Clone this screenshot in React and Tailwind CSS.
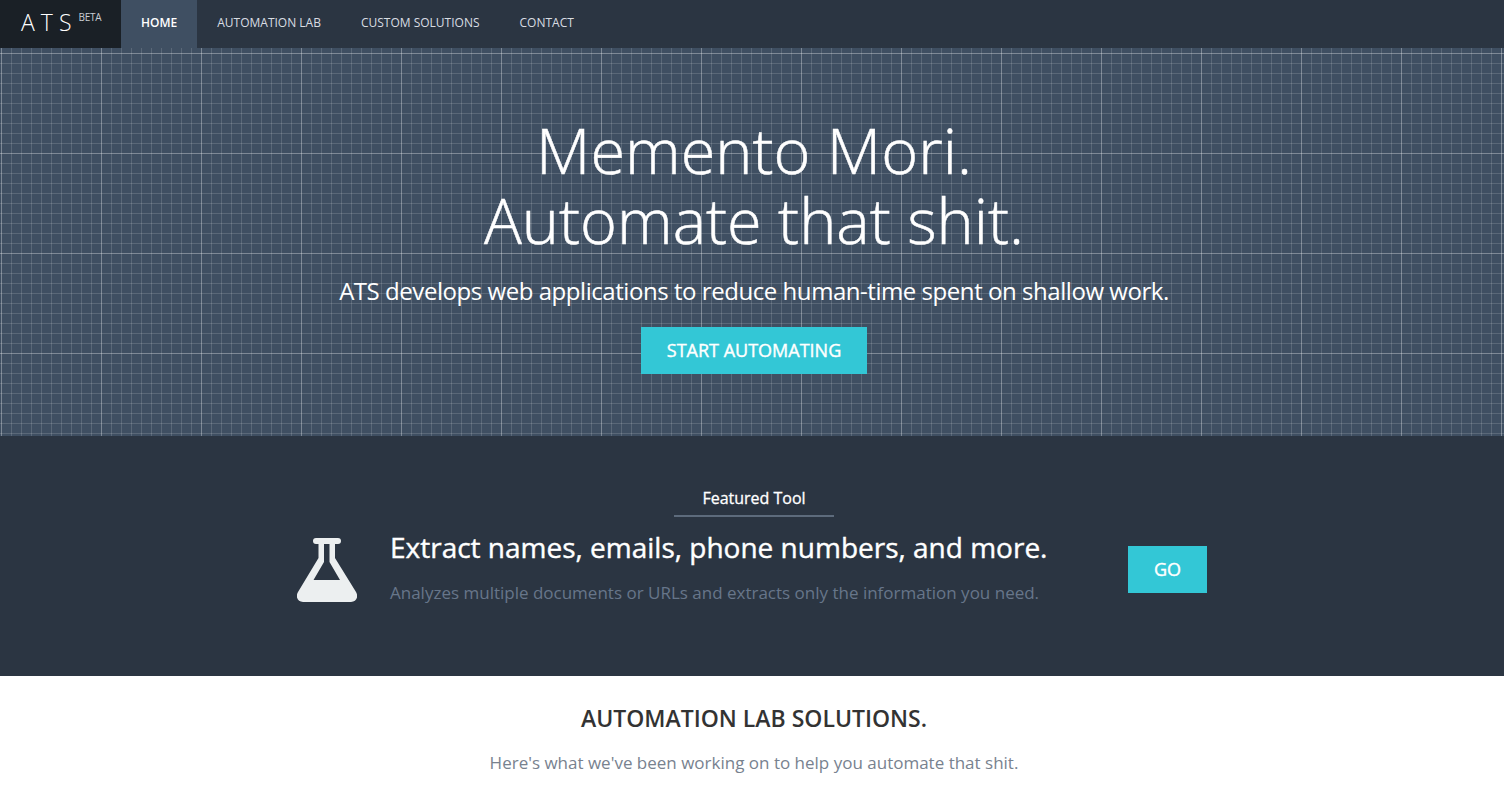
const navItems = ["Automation Lab", "Custom Solutions", "Contact"];

function Flask({ className }) {
  return (
    <svg viewBox="0 0 60 64" className={className} fill="#eceff0" fillRule="evenodd">
      <path d="M19 0H41a3 3 0 0 1 0 6H38V20L59 54C62 59 59 64 54 64H6C1 64-2 59 1 54L21.500 20V6H19a3 3 0 0 1 0-6zM27 6V24L16.500 42H43L32.500 24V6z" />
    </svg>
  );
}

export default function App() {
  return (
    <div className="h-[785px] overflow-hidden bg-white font-['Open_Sans',sans-serif]">
      <nav className="flex h-12 bg-[#2b3542]">
        <a className="flex w-[121px] bg-[#1a2026] pl-[21px] text-white">
          <span className="mt-[7px] text-[23px] leading-[30px] font-light tracking-[6px]">ATS</span>
          <span className="mt-[10px] ml-[1px] text-[10px] leading-[14px] tracking-[-0.2px] text-[#c9ced4]">BETA</span>
        </a>
        <a className="flex items-center bg-[#3f4f62] px-5 pb-[2px] text-xs font-semibold text-white">HOME</a>
        {navItems.map((item) => (
          <a key={item} className="flex items-center px-5 pb-[2px] text-xs font-normal text-[#d9dde2] uppercase">
            {item}
          </a>
        ))}
      </nav>

      <section className="flex h-[388px] flex-col items-center bg-[#3f4f62] bg-[linear-gradient(rgba(255,255,255,0.22)_1px,transparent_1px),linear-gradient(90deg,rgba(255,255,255,0.22)_1px,transparent_1px),linear-gradient(rgba(255,255,255,0.14)_1px,transparent_1px),linear-gradient(90deg,rgba(255,255,255,0.14)_1px,transparent_1px)] bg-[size:100px_100px,100px_100px,10px_10px,10px_10px] bg-[position:0_5px,1px_0,0_5px,1px_0] pt-[67px] pl-1 text-white">
        <h1 className="text-center text-[63px] leading-[70px] font-light [-webkit-text-stroke:0.5px_white]">
          Memento Mori.
          <br />
          Automate that shit.
        </h1>
        <p className="mt-[19px] text-2xl leading-[34px] font-normal tracking-[-0.45px]">
          ATS develops web applications to reduce human-time spent on shallow work.
        </p>
        <button type="button" className="mt-[19px] h-[47px] w-[226px] bg-[#33c7d6] pb-[1px] text-lg font-normal text-white [-webkit-text-stroke:0.4px_white]">
          START AUTOMATING
        </button>
      </section>

      <section className="h-[240px] bg-[#2b3542] pt-[50px]">
        <div className="pl-1">
          <div className="mx-auto w-[160px] border-b-2 border-[#5d6b7c] pb-[5px] text-center text-base leading-[24px] font-normal text-white [-webkit-text-stroke:0.3px_white]">
            Featured Tool
          </div>
        </div>
        <div className="mx-auto mt-[11px] flex w-[910px] items-start">
          <Flask className="mt-[10px] h-16 w-[60px]" />
          <div className="ml-[33px] w-[738px]">
            <h2 className="text-[28px] leading-[38px] font-normal text-white [-webkit-text-stroke:0.4px_white]">
              Extract names, emails, phone numbers, and more.
            </h2>
            <p className="mt-[15px] text-[17px] leading-[24px] text-[#67768a]">
              Analyzes multiple documents or URLs and extracts only the information you need.
            </p>
          </div>
          <button type="button" className="mt-[18px] h-[47px] w-[79px] bg-[#33c7d6] pb-[1px] text-lg font-normal text-white [-webkit-text-stroke:0.4px_white]">
            GO
          </button>
        </div>
      </section>

      <section className="pt-[25px] pl-1 text-center">
        <h3 className="text-[23px] leading-[34px] font-semibold text-[#333]">AUTOMATION LAB SOLUTIONS.</h3>
        <p className="mt-[16px] text-[17px] leading-[24px] text-[#78828f]">
          Here's what we've been working on to help you automate that shit.
        </p>
      </section>
    </div>
  );
}
